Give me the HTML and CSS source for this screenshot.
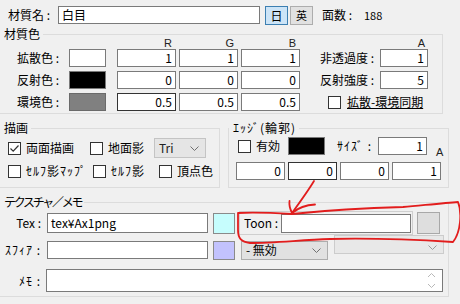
FILE: index.html
```html
<!DOCTYPE html>
<html lang="ja">
<head>
<meta charset="utf-8">
<link rel="stylesheet" href="styles.css">
</head>
<body>
<div class="top">
  <span class="top-lbl">材質名 :</span>
  <div class="edit name">白目</div>
  <div class="btn btn-on">日</div>
  <div class="btn btn-en">英</div>
  <span class="faces">面数 :</span><span class="faces-n">188</span>
</div>

<div class="group g-color">
  <div class="gtitle">材質色</div>
  <div class="cgrid">
    <span class="hd c-r">R</span>
    <span class="hd c-g">G</span>
    <span class="hd c-b">B</span>
    <span class="hd c-a">A</span>

    <span class="rlbl r1">拡散色 :</span>
    <span class="sw sw-white r1"></span>
    <div class="edit c-r r1">1</div>
    <div class="edit c-g r1">1</div>
    <div class="edit c-b r1">1</div>
    <span class="rlbl2 r1">非透過度 :</span>
    <div class="edit c-a r1">1</div>

    <span class="rlbl r2">反射色 :</span>
    <span class="sw sw-black r2"></span>
    <div class="edit c-r r2">0</div>
    <div class="edit c-g r2">0</div>
    <div class="edit c-b r2">0</div>
    <span class="rlbl2 r2">反射強度 :</span>
    <div class="edit c-a r2">5</div>

    <span class="rlbl r3">環境色 :</span>
    <span class="sw sw-gray r3"></span>
    <div class="edit focus c-r r3">0.5</div>
    <div class="edit c-g r3">0.5</div>
    <div class="edit c-b r3">0.5</div>
    <span class="sync r3"><span class="cb"></span><span class="ul">拡散-環境同期</span></span>
  </div>
</div>

<div class="row2">
  <div class="group g-draw">
    <div class="gtitle">描画</div>
    <div class="drow d1">
      <span class="chk w82"><span class="cb"><svg width="11" height="11" viewBox="0 0 11 11"><path d="M1.5 5.5 L4.2 8.2 L9.5 2.5" fill="none" stroke="#333" stroke-width="1.2"/></svg></span><span>両面描画</span></span>
      <span class="chk w64"><span class="cb"></span><span>地面影</span></span>
      <div class="combo tri"><span>Tri</span><svg class="chev" width="9" height="5" viewBox="0 0 9 5"><polyline points="0.5,0.5 4.5,4.5 8.5,0.5" fill="none" stroke="#707070"/></svg></div>
    </div>
    <div class="drow d2">
      <span class="chk w85"><span class="cb"></span><span class="hw">ｾﾙﾌ影ﾏｯﾌﾟ</span></span>
      <span class="chk w66"><span class="cb"></span><span class="hw">ｾﾙﾌ影</span></span>
      <span class="chk"><span class="cb"></span><span>頂点色</span></span>
    </div>
  </div>

  <div class="group g-edge">
    <div class="gtitle hw">ｴｯｼﾞ(輪郭)</div>
    <div class="erow e1">
      <span class="cb"></span><span class="e-on">有効</span>
      <span class="sw sw-black e-sw"></span>
      <span class="e-size hw">ｻｲｽﾞ :</span>
      <div class="edit e-in">1</div>
      <span class="e-a">A</span>
    </div>
    <div class="erow e2">
      <div class="edit e4">0</div>
      <div class="edit e4 focus">0</div>
      <div class="edit e4">0</div>
      <div class="edit e4">1</div>
    </div>
  </div>
</div>

<div class="group g-tex">
  <div class="gtitle prop">テクスチャ／メモ</div>
  <div class="trow t1">
    <span class="tlbl">Tex :</span>
    <div class="edit tin left">tex¥Ax1png</div>
    <span class="sw sw-cyan tsw"></span>
    <div class="toon">
      <span class="toon-lbl">Toon :</span>
      <div class="edit toon-in"></div>
    </div>
    <span class="gbtn"></span>
  </div>
  <div class="trow t2">
    <span class="tlbl hw">ｽﾌｨｱ :</span>
    <div class="edit tin sph"></div>
    <span class="sw sw-lav tsw sph"></span>
    <div class="combo mode"><span>- 無効</span><svg class="chev" width="9" height="5" viewBox="0 0 9 5"><polyline points="0.5,0.5 4.5,4.5 8.5,0.5" fill="none" stroke="#707070"/></svg></div>
    <div class="combo off"><svg class="chev" width="9" height="5" viewBox="0 0 9 5"><polyline points="0.5,0.5 4.5,4.5 8.5,0.5" fill="none" stroke="#9a9a9a"/></svg></div>
  </div>
  <div class="trow t3">
    <span class="tlbl hw">ﾒﾓ :</span>
    <div class="memo">
      <svg class="scr" width="9" height="17" viewBox="0 0 9 17"><polyline points="1,5 4.5,1.5 8,5" fill="none" stroke="#b8b8b8"/><polyline points="1,12 4.5,15.5 8,12" fill="none" stroke="#b8b8b8"/></svg>
    </div>
  </div>
</div>

<svg class="ink" width="460" height="304" viewBox="0 0 460 304">
  <path d="M314 181 C308 191, 300 202, 292 213"/>
  <path d="M292 213 C290 209, 289 205, 289.5 201"/>
  <path d="M292 213 C298 208, 306 205, 315 204.5"/>
  <path d="M238 213 C255 212, 275 213, 292 214 C320 211, 360 208, 403 207 C425 205, 445 203, 458 202 C462 212, 461 232, 453 242 C420 240, 370 238, 330 239 C300 240, 275 243, 250 243 C241 242, 238 238, 238 230 C238 222, 238 216, 238 213"/>
</svg>
</body>
</html>
```

FILE: styles.css
```css
html, body {
  margin: 0;
  padding: 0;
}
body {
  background: #f0f0f0;
  font: 12px/14px "Noto Sans CJK JP", "Liberation Sans", sans-serif;
  color: #000;
  width: 460px;
  height: 304px;
  overflow: hidden;
  position: relative;
}

.hw { letter-spacing: 1px; }
.prop { letter-spacing: -2.3px; }

/* generic controls */
.edit {
  box-sizing: border-box;
  border: 1px solid #7a7a7a;
  background: #fff;
  height: 18px;
  line-height: 16px;
  padding: 0 3px;
  text-align: right;
  white-space: nowrap;
  overflow: hidden;
}
.edit.focus { border-color: #333; }
.edit.left { text-align: left; }
.sw {
  box-sizing: border-box;
  display: block;
  border: 1px solid #7a7a7a;
  height: 18px;
}
.sw-white { background: #fff; }
.sw-black { background: #000; }
.sw-gray { background: #808080; border-color: #6a6a6a; }
.sw-cyan { background: #c6fdfd; border-color: #8a8a8a; }
.sw-lav { background: #c2c2fd; border-color: #8a8a8a; }
.cb {
  box-sizing: border-box;
  display: inline-block;
  width: 13px;
  height: 13px;
  border: 1px solid #333;
  background: #fff;
  flex: none;
}
.cb svg { display: block; }

/* top row */
.top {
  display: flex;
  align-items: center;
  height: 18px;
  margin-top: 6px;
  padding-left: 8px;
}
.top-lbl { width: 50px; white-space: nowrap; }
.name { width: 202px; text-align: left; padding-left: 3px; height: 18px; }
.btn {
  box-sizing: border-box;
  width: 23px;
  height: 19px;
  margin-left: 5px;
  border: 1px solid #adadad;
  background: #e1e1e1;
  text-align: center;
  line-height: 17px;
  font-size: 11px;
}
.btn-on { background: #cce4f7; border-color: #3c7fb1; font-size: 12px; }
.btn-en { margin-left: 2px; }
.faces { margin-left: 9px; width: 42px; }
.faces-n { font-size: 11px; }

/* group boxes */
.group {
  box-sizing: border-box;
  border: 1px solid #dcdcdc;
}
.gtitle {
  margin-top: -8px;
  line-height: 14px;
  background: #f0f0f0;
  width: max-content;
  padding: 0 3px 0 4px;
  white-space: nowrap;
}

/* material colour group */
.g-color {
  margin-top: 10px;
  margin-left: -1px;
  width: 444px;
  height: 80px;
}
.cgrid {
  margin-top: -3px;
  margin-left: 1px;
  display: grid;
  grid-template-columns: 68px 37px 11px 59px 3px 59px 3px 59px 20px 60px 48px;
  grid-template-rows: 11px 22px 22px 20px;
}
.hd {
  grid-row: 1;
  text-align: right;
  padding-right: 4px;
  font: 11px/11px "Liberation Sans", sans-serif;
  color: #222;
}
.hd.c-a { padding-right: 3px; }
.c-r { grid-column: 4; }
.c-g { grid-column: 6; }
.c-b { grid-column: 8; }
.c-a { grid-column: 11; }
.r1 { grid-row: 2; }
.r2 { grid-row: 3; }
.r3 { grid-row: 4; }
.rlbl {
  grid-column: 1;
  padding-left: 16px;
  line-height: 18px;
  white-space: nowrap;
}
.sw.r1, .sw.r2, .sw.r3 { grid-column: 2; }
.rlbl2 {
  grid-column: 10;
  line-height: 18px;
  white-space: nowrap;
}
.sync {
  grid-column: 10 / 12;
  display: flex;
  align-items: center;
  height: 18px;
  padding-left: 8px;
}
.sync .ul {
  margin-left: 6px;
  text-decoration: underline;
  white-space: nowrap;
}

/* second row of groups */
.row2 {
  display: flex;
  margin-top: 14px;
  margin-left: -1px;
  gap: 8px;
}
.g-draw { width: 221px; padding-bottom: 6px; }
.g-edge { width: 221px; }
.drow {
  display: flex;
  align-items: center;
  height: 20px;
  margin-top: 3px;
  padding-left: 8px;
}
.chk {
  display: inline-flex;
  align-items: center;
  white-space: nowrap;
}
.chk .cb { margin-right: 5px; }
.w82 { width: 82px; }
.w64 { width: 64px; }
.w85 { width: 85px; }
.w66 { width: 66px; }
.combo {
  box-sizing: border-box;
  display: flex;
  align-items: center;
  justify-content: space-between;
  border: 1px solid #c4c4c4;
  background: #e5e5e5;
  padding: 0 6px 0 4px;
}
.combo .chev { flex: none; }
.tri { width: 52px; height: 20px; color: #222; }

.erow { display: flex; align-items: center; }
.e1 { margin-top: 2px; height: 18px; padding-left: 9px; }
.e-on { margin-left: 5px; width: 24px; }
.e-sw { width: 37px; margin-left: 8px; }
.e-size { margin-left: 12px; width: 41px; white-space: nowrap; }
.e-in { width: 49px; }
.e-a {
  align-self: flex-end;
  margin-left: 9px;
  margin-bottom: -3px;
  font: 11px/11px "Liberation Sans", sans-serif;
  color: #222;
}
.e2 { margin-top: 7px; padding-left: 7px; gap: 3px; }
.e4 { width: 49px; }

/* texture group */
.g-tex {
  margin-top: 14px;
  margin-left: -1px;
  width: 450px;
  padding-bottom: 4px;
}
.trow { display: flex; align-items: center; }
.t1 { height: 22px; margin-top: 3px; }
.t2 { height: 20px; margin-top: 6px; }
.t3 { height: 23px; margin-top: 9px; }
.tlbl {
  width: 41px;
  text-align: right;
  white-space: nowrap;
}
.tlbl.hw { letter-spacing: 1px; }
.tin { width: 161px; margin-left: 6px; height: 20px; line-height: 18px; }
.tin.sph { height: 18px; }
.tsw { width: 22px; height: 21px; margin-left: 5px; }
.tsw.sph { height: 19px; }
.toon {
  box-sizing: border-box;
  display: flex;
  align-items: center;
  width: 174px;
  height: 24px;
  margin-left: 4px;
  border: 1px solid #cfcfcf;
  padding-left: 4px;
}
.toon-lbl { width: 37px; white-space: nowrap; }
.toon-in { width: 130px; height: 19px; }
.gbtn {
  box-sizing: border-box;
  display: block;
  width: 23px;
  height: 22px;
  margin-left: 4px;
  border: 1px solid #a8a8a8;
  background: #dedede;
}
.mode {
  width: 87px;
  height: 19px;
  margin-left: 6px;
  background: #e1e1e1;
  border-color: #adadad;
}
.off {
  width: 110px;
  height: 19px;
  margin-left: 6px;
  align-self: flex-start;
  margin-top: -5px;
  justify-content: flex-end;
  align-items: flex-end;
  padding-bottom: 3px;
  background: #e8e8e8;
  border-color: #cccccc;
}
.memo {
  box-sizing: border-box;
  width: 397px;
  height: 23px;
  margin-left: 5px;
  border: 1px solid #7a7a7a;
  background: #fff;
  display: flex;
  justify-content: flex-end;
  align-items: center;
  padding-right: 6px;
}
.scr { display: block; }

/* hand-drawn annotation overlay */
.ink {
  position: absolute;
  left: 0;
  top: 0;
  pointer-events: none;
}
.ink path {
  fill: none;
  stroke: #e21d1d;
  stroke-width: 1.8;
  stroke-linecap: round;
  stroke-linejoin: round;
}
```
